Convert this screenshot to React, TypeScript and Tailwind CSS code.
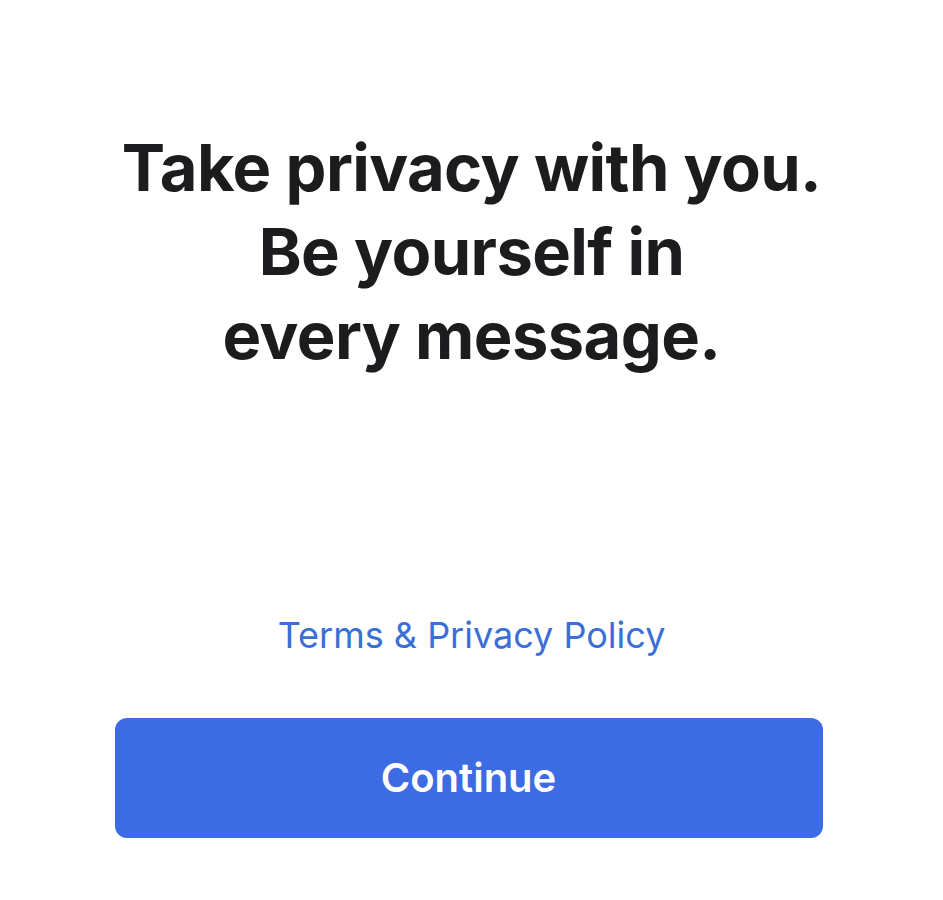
import React from 'react';

const App: React.FC = () => {
  return (
    <div className="min-h-[900px] w-full bg-white flex flex-col items-center" style={{ fontFamily: 'Inter, "Noto Sans", sans-serif' }}>
      <h1 className="mt-[126px] text-center text-[65px] leading-[84px] font-bold tracking-[-0.6px] text-[#1c1c1e]">
        Take privacy with you.
        <br />
        Be yourself in
        <br />
        every message.
      </h1>

      <a href="#" className="mt-[237px] text-[36px] leading-[40px] text-[#3b6fd6]">
        Terms &amp; Privacy Policy
      </a>

      <button
        type="button"
        className="mt-[63px] mr-[6px] w-[708px] h-[120px] rounded-[12px] bg-[#3c6be3] text-white text-[40px] font-semibold flex items-center justify-center"
      >
        Continue
      </button>
    </div>
  );
};

export default App;
